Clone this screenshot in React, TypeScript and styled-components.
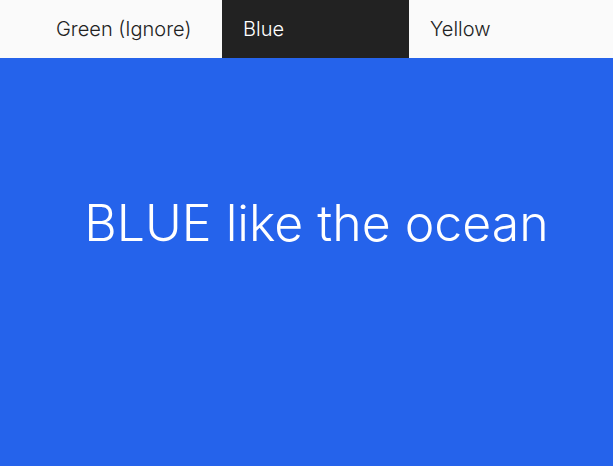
import React, { useState } from 'react';
import styled, { createGlobalStyle } from 'styled-components';

const GlobalStyle = createGlobalStyle`
  html, body {
    margin: 0;
    padding: 0;
    height: 100%;
  }
  body {
    font-family: Inter, 'Noto Sans', sans-serif;
    background: #2563eb;
  }
`;

const TabBar = styled.nav`
  display: flex;
  height: 58px;
  padding-left: 35px;
  background: #fafafa;
`;

const Tab = styled.button<{ $active: boolean }>`
  width: 187px;
  padding: 0 0 0 21px;
  border: none;
  text-align: left;
  font-family: inherit;
  font-size: 20px;
  font-weight: 300;
  cursor: pointer;
  background: ${(p) => (p.$active ? '#222222' : 'transparent')};
  color: ${(p) => (p.$active ? '#ffffff' : '#222222')};
`;

const Panel = styled.main`
  display: flex;
  justify-content: center;
  padding: 135px 0 0 20px;
  background: #2563eb;
  color: #ffffff;
`;

const Heading = styled.h1`
  margin: 0;
  font-size: 50px;
  font-weight: 300;
  line-height: 1.2;
`;

const tabs = [
  { id: 'green', label: 'Green (Ignore)', text: 'GREEN like the grass' },
  { id: 'blue', label: 'Blue', text: 'BLUE like the ocean' },
  { id: 'yellow', label: 'Yellow', text: 'YELLOW like the sun' },
];

export default function App() {
  const [active, setActive] = useState('blue');
  const current = tabs.find((t) => t.id === active) ?? tabs[1];

  return (
    <>
      <GlobalStyle />
      <TabBar>
        {tabs.map((t) => (
          <Tab key={t.id} $active={t.id === active} onClick={() => setActive(t.id)}>
            {t.label}
          </Tab>
        ))}
      </TabBar>
      <Panel>
        <Heading>{current.text}</Heading>
      </Panel>
    </>
  );
}
